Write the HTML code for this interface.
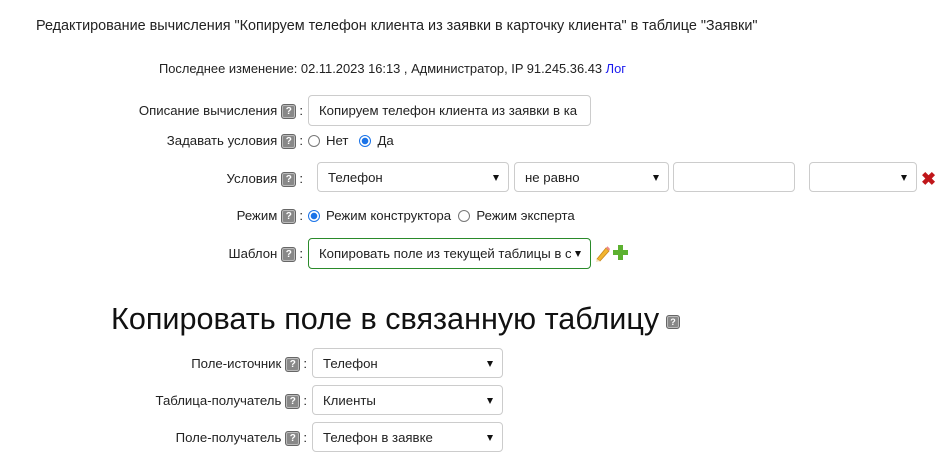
<!DOCTYPE html>
<html><head><meta charset="utf-8"><style>
body{margin:0;width:950px;height:460px;background:#fff;font-family:"Liberation Sans",sans-serif;font-size:13.2px;color:#222;position:relative;overflow:hidden}
.a{position:absolute;white-space:nowrap}
.lab{position:absolute;left:0;text-align:right;white-space:nowrap;line-height:16px;height:16px}
.h{display:inline-block;width:13px;height:13px;background:#888;border:1px solid #666;border-radius:3px;color:#fff;font-size:10px;line-height:13px;text-align:center;font-weight:bold;vertical-align:top;margin:1px 3px 0 4px;box-shadow:inset 0 0 0 1px #bbb}
.box{position:absolute;border:1px solid #ccc;border-radius:4px;box-sizing:border-box;background:#fff;line-height:29px;padding-left:10px;white-space:nowrap;overflow:hidden}
.box.s::after{content:"";position:absolute;right:9px;top:12px;border-left:3.5px solid transparent;border-right:3.5px solid transparent;border-top:6px solid #111}
.r{display:inline-block;width:12px;height:12px;border:1px solid #777;border-radius:50%;box-sizing:border-box;vertical-align:-2px;margin-right:6px}
.r.on{border:1.5px solid #1a73e8;background:radial-gradient(circle,#1a73e8 3px,#fff 3.5px)}
</style></head><body>
<div class="a" style="left:36px;top:18px;font-size:14.4px">Редактирование вычисления "Копируем телефон клиента из заявки в карточку клиента" в таблице "Заявки"</div>
<div class="a" style="left:159px;top:61px;font-size:12.9px">Последнее изменение: 02.11.2023 16:13 , Администратор, IP 91.245.36.43 <span style="color:#1a1aee">Лог</span></div>

<div class="lab" style="width:303px;top:103px">Описание вычисления<span class="h">?</span>:</div>
<div class="box" style="left:308px;top:95px;width:283px;height:31px;line-height:30px;padding-right:8px">Копируем телефон клиента из заявки в ка</div>

<div class="lab" style="width:303px;top:133px">Задавать условия<span class="h">?</span>:</div>
<div class="a" style="left:308px;top:133px"><span class="r"></span>Нет &nbsp;&nbsp;<span class="r on"></span>Да</div>

<div class="lab" style="width:303px;top:171px">Условия<span class="h">?</span>:</div>
<div class="box s" style="left:317px;top:162px;width:192px;height:30px">Телефон</div>
<div class="box s" style="left:514px;top:162px;width:155px;height:30px">не равно</div>
<div class="box" style="left:673px;top:162px;width:122px;height:30px"></div>
<div class="box s" style="left:809px;top:162px;width:108px;height:30px"></div>
<div class="a" style="left:921px;top:169px;color:#c0161a;font-size:18px;font-weight:bold;line-height:20px">✖</div>

<div class="lab" style="width:303px;top:208px">Режим<span class="h">?</span>:</div>
<div class="a" style="left:308px;top:208px"><span class="r on"></span>Режим конструктора &nbsp;<span class="r"></span>Режим эксперта</div>

<div class="lab" style="width:303px;top:246px">Шаблон<span class="h">?</span>:</div>
<div class="box s" style="left:308px;top:238px;width:283px;height:31px;border-color:#2a8a2a;line-height:30px"><div style="width:252px;overflow:hidden">Копировать поле из текущей таблицы в связанную</div></div>
<svg class="a" style="left:594px;top:244px" width="16" height="18" viewBox="0 0 16 18"><path d="M3 15 L12 4 L15 7 L6 17 Z" fill="#f2b530" stroke="#c9861a" stroke-width="0.8"/><path d="M12 4 L13.5 2.3 L16 5 L15 7Z" fill="#e88" /><path d="M3 15 L2 18 L6 17Z" fill="#f5deb3"/></svg>
<svg class="a" style="left:613px;top:245px" width="15" height="15" viewBox="0 0 15 15"><path d="M5 0h5v5h5v5h-5v5h-5v-5h-5v-5h5z" fill="#5cb130"/></svg>

<div class="a" style="left:111px;top:301px;font-size:30.6px;color:#111;line-height:36px">Копировать поле в связанную таблицу</div>
<span class="h a" style="left:666px;top:315px;width:12px;height:12px;line-height:12px;font-size:9px;margin:0">?</span>

<div class="lab" style="width:307px;top:356px">Поле-источник<span class="h">?</span>:</div>
<div class="box s" style="left:312px;top:348px;width:191px;height:30px">Телефон</div>
<div class="lab" style="width:307px;top:393px">Таблица-получатель<span class="h">?</span>:</div>
<div class="box s" style="left:312px;top:385px;width:191px;height:30px">Клиенты</div>
<div class="lab" style="width:307px;top:430px">Поле-получатель<span class="h">?</span>:</div>
<div class="box s" style="left:312px;top:422px;width:191px;height:30px">Телефон в заявке</div>
</body></html>
